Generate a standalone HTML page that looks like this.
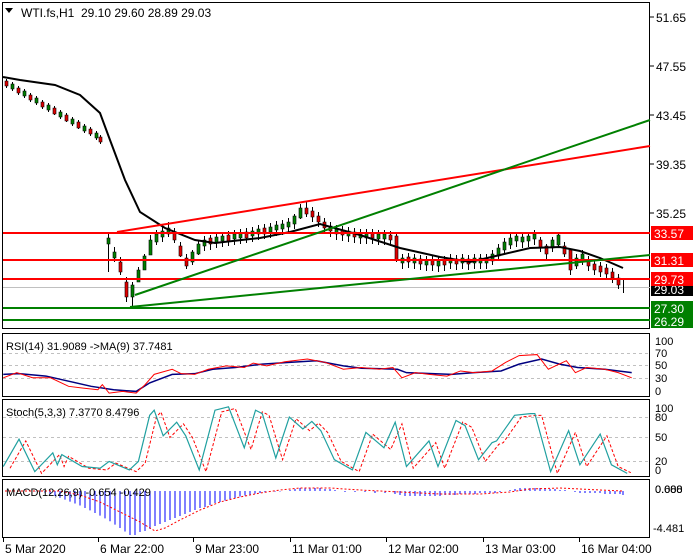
<!DOCTYPE html>
<html><head><meta charset="utf-8"><style>
html,body{margin:0;padding:0;background:#fff;width:700px;height:560px;overflow:hidden}
svg{display:block;font-family:"Liberation Sans",sans-serif}
text{font-size:12px}
.s{font-size:11px}
</style></head><body>
<svg width="700" height="560" xmlns="http://www.w3.org/2000/svg">
<!-- frames -->
<rect x="2.5" y="2.5" width="647" height="326" fill="none" stroke="#000"/>
<rect x="2.5" y="333.5" width="647" height="63" fill="none" stroke="#000"/>
<rect x="2.5" y="399.5" width="647" height="77" fill="none" stroke="#000"/>
<rect x="2.5" y="479.5" width="647" height="58" fill="none" stroke="#000"/>
<!-- price axis -->
<path d="M650,17h4M650,66h4M650,115h4M650,164h4M650,213h4" stroke="#000"/>
<text x="656" y="22">51.65</text><text x="656" y="71">47.55</text><text x="656" y="120">43.45</text><text x="656" y="169">39.35</text><text x="656" y="218">35.25</text>
<line x1="3" y1="287.5" x2="650" y2="287.5" stroke="#c0c0c0"/>
<!-- wicks -->
<path stroke="#000" fill="none" d="M6.5,79v9M12.5,82v9M18.5,86v9M24.5,89v9M30.5,93v9M36.5,96v9M42.5,100v9M48.5,103v9M54.5,106v9M60.5,110v9M66.5,113v9M72.5,117v9M78.5,120v9M84.5,124v9M90.5,127v9M96.5,131v9M100.5,135v9
M108.5,232v40M114.5,247v15M120.5,257v18M126.5,277v25M132.5,282v25M138.5,267v15M144.5,254v15M150.5,235v20M156.5,230v15M162.5,227v15M168.5,222v15M174.5,228v15M180.5,242v15M186.5,254v15M192.5,250v15M198.5,240v15M204.5,236v15M210.5,235v15M216.5,233v15M222.5,232v15M228.5,231v15M234.5,230v15M240.5,229v15M246.5,228v15M252.5,227v15M258.5,225v15M264.5,224v15M270.5,223v15M276.5,221v15M282.5,220v15M288.5,218v15M294.5,214v15M300.5,204v15M306.5,202v15M312.5,207v15M318.5,212v15M324.5,218v15M330.5,222v15M336.5,225v15M342.5,226v15M348.5,227v15M354.5,228v15M360.5,229v15M366.5,229v15M372.5,229v15M378.5,230v15M384.5,230v15M390.5,231v15M396.5,232v30M402.5,254v15M408.5,253v15M414.5,254v15M420.5,255v15M426.5,256v15M432.5,256v15M438.5,257v15M444.5,256v15M450.5,254v15M456.5,255v15M462.5,254v15M468.5,255v15M474.5,254v15M480.5,254v15M486.5,254v15M492.5,250v15M498.5,244v15M504.5,238v15M510.5,234v15M516.5,232v15M522.5,233v15M528.5,232v15M534.5,230v15M540.5,237v15M546.5,244v15M552.5,237v15M558.5,232v15M564.5,242v15M570.5,250v25M576.5,254v15M582.5,250v15M588.5,256v15M594.5,260v15M600.5,262v15M606.5,264v15M612.5,268v15M618.5,274v15M623.5,280v13"/>
<!-- red bodies -->
<path fill="#e00000" stroke="#000" stroke-width="0.6" d="M5,81h3v5h-3zM17,88h3v5h-3zM29,95h3v5h-3zM41,102h3v5h-3zM53,108h3v6h-3zM65,115h3v6h-3zM77,122h3v6h-3zM89,129h3v5h-3zM99,137h3v5h-3z
M119,262h3v10h-3zM125,282h3v15h-3zM173,232h3v8h-3zM179,246h3v10h-3zM185,258h3v8h-3zM209,238h3v6h-3zM227,235h3v6h-3zM245,232h3v6h-3zM263,228h3v6h-3zM305,208h3v6h-3zM311,211h3v6h-3zM317,216h3v6h-3zM323,222h3v6h-3zM329,226h3v5h-3zM341,230h3v5h-3zM353,232h3v5h-3zM371,233h3v5h-3zM389,235h3v5h-3zM395,236h3v24h-3zM407,257h3v5h-3zM419,259h3v5h-3zM431,260h3v5h-3zM443,260h3v5h-3zM455,259h3v5h-3zM467,259h3v5h-3zM539,240h3v8h-3zM545,246h3v8h-3zM563,246h3v8h-3zM569,250h3v20h-3zM587,260h3v6h-3zM593,264h3v6h-3zM599,266h3v6h-3zM605,268h3v6h-3zM611,272h3v6h-3zM617,278h3v7h-3z"/>
<!-- green bodies -->
<path fill="#008000" stroke="#000" stroke-width="0.6" d="M11,84h3v5h-3zM23,91h3v5h-3zM35,98h3v5h-3zM47,105h3v5h-3zM59,112h3v5h-3zM71,119h3v5h-3zM83,126h3v5h-3zM95,133h3v5h-3z
M107,238h3v6h-3zM113,252h3v6h-3zM131,285h3v12h-3zM137,270h3v12h-3zM143,256h3v14h-3zM149,240h3v15h-3zM155,234h3v8h-3zM161,231h3v6h-3zM167,228h3v6h-3zM191,252h3v10h-3zM197,244h3v10h-3zM203,240h3v6h-3zM215,237h3v6h-3zM221,236h3v5h-3zM233,234h3v5h-3zM239,233h3v5h-3zM251,231h3v5h-3zM257,229h3v5h-3zM269,227h3v5h-3zM275,225h3v5h-3zM281,224h3v5h-3zM287,222h3v5h-3zM293,216h3v8h-3zM299,208h3v10h-3zM335,229h3v5h-3zM347,231h3v5h-3zM359,233h3v5h-3zM365,233h3v5h-3zM377,234h3v5h-3zM383,234h3v5h-3zM401,258h3v5h-3zM413,258h3v5h-3zM425,260h3v5h-3zM437,261h3v5h-3zM449,258h3v5h-3zM461,258h3v5h-3zM473,258h3v5h-3zM479,258h3v5h-3zM485,258h3v5h-3zM491,254h3v7h-3zM497,248h3v8h-3zM503,242h3v8h-3zM509,238h3v7h-3zM515,236h3v5h-3zM521,237h3v5h-3zM527,236h3v5h-3zM533,234h3v5h-3zM551,240h3v8h-3zM557,235h3v10h-3zM575,258h3v8h-3zM581,254h3v8h-3z"/>
<!-- MA -->
<polyline fill="none" stroke="#000" stroke-width="2" points="3,77 20,80 55,85 80,95 100,113 110,140 125,180 140,212 165,228 195,240 215,243 260,238 290,232 320,224 360,235 400,248 440,257 470,262 500,255 530,248 560,247 580,251 600,258 623,268"/>
<!-- lines -->
<path stroke="#ff0000" stroke-width="2" d="M3,233H650M3,260H650M3,279H650M117,232L650,146"/>
<path stroke="#008000" stroke-width="2" d="M3,308H650M3,320H650M135,295L650,120M130,307L650,255"/>
<!-- labels -->
<rect x="651" y="226" width="42" height="14" fill="#ff0000"/><text x="654" y="238" fill="#fff">33.57</text>
<rect x="651" y="253" width="42" height="14" fill="#ff0000"/><text x="654" y="265" fill="#fff">31.31</text>
<rect x="651" y="282" width="42" height="14" fill="#000"/><text x="654" y="294" fill="#fff">29.03</text>
<rect x="651" y="272" width="42" height="14" fill="#ff0000"/><text x="654" y="284" fill="#fff">29.73</text>
<rect x="651" y="301" width="42" height="14" fill="#008000"/><text x="654" y="313" fill="#fff">27.30</text>
<rect x="651" y="314" width="42" height="14" fill="#008000"/><text x="654" y="326" fill="#fff">26.29</text>
<!-- title -->
<polygon points="5,8 13,8 9,13" fill="#000"/>
<text x="21" y="17">WTI.fs,H1&#160;&#160;29.10 29.60 28.89 29.03</text>
<!-- RSI -->
<path stroke="#c0c0c0" stroke-dasharray="3,3" d="M3,353.5H649M3,365.5H649M3,378.5H649"/>
<g transform="translate(1,330) scale(0.4505,0.3413)">
<polyline vector-effect="non-scaling-stroke" fill="none" stroke="#000080" stroke-width="1.5" points="5,130 40,128 100,135 150,150 200,165 250,175 300,180 330,155 380,130 430,128 470,115 520,110 580,100 640,95 700,90 760,105 800,112 880,115 900,125 1000,130 1050,125 1110,120 1150,100 1200,85 1240,100 1280,110 1340,115 1400,125"/>
<polyline vector-effect="non-scaling-stroke" fill="none" stroke="#ff0000" stroke-width="1" points="5,140 35,125 70,140 110,140 150,165 180,170 215,175 225,160 240,185 270,180 300,185 320,160 340,130 380,115 400,128 430,130 460,115 500,105 540,110 560,97 590,105 630,93 680,85 720,95 760,115 800,110 840,115 870,110 890,140 920,125 950,130 990,135 1020,120 1050,125 1090,120 1120,95 1150,75 1190,72 1215,115 1255,90 1275,125 1300,110 1340,115 1370,125 1400,140"/>
</g>
<text class="s" x="6" y="350">RSI(14) 31.9089  -&gt;MA(9) 37.7481</text>
<text class="s" x="655" y="345">100</text><text class="s" x="655" y="357">70</text><text class="s" x="655" y="369">50</text><text class="s" x="655" y="382">30</text><text class="s" x="655" y="395">0</text>
<!-- Stoch -->
<path stroke="#c0c0c0" stroke-dasharray="3,3" d="M3,417.5H649M3,437.5H649M3,461.5H649"/>
<g transform="translate(1,330) scale(0.4505,0.3413)">
<polyline vector-effect="non-scaling-stroke" fill="none" stroke="#ff0000" stroke-width="1" stroke-dasharray="3,2" points="20,405 55,325 90,420 130,365 140,400 150,370 195,405 235,410 255,390 300,415 320,390 345,255 355,240 375,315 405,275 425,315 455,415 490,240 520,230 555,350 580,240 595,250 625,380 655,260 685,295 705,273 725,300 755,385 795,415 825,305 865,350 890,275 915,405 965,330 985,405 1025,270 1045,285 1075,385 1105,335 1115,330 1155,255 1190,250 1200,250 1235,420 1275,300 1300,400 1345,310 1370,400 1398,418"/>
<polyline vector-effect="non-scaling-stroke" fill="none" stroke="#20a0a0" stroke-width="1.2" points="5,400 40,320 75,415 115,360 125,395 135,365 180,400 220,405 240,385 285,410 305,385 330,250 340,235 360,310 390,270 410,310 440,410 475,235 505,225 540,345 565,235 580,245 610,375 640,255 670,290 690,268 710,295 740,380 780,410 810,300 850,345 875,270 900,400 950,325 970,400 1010,265 1030,280 1060,380 1090,330 1100,325 1140,250 1175,245 1185,245 1220,415 1260,295 1285,395 1330,305 1355,395 1390,420"/>
</g>
<text class="s" x="6" y="416">Stoch(5,3,3) 7.3770 8.4796</text>
<text class="s" x="655" y="412">100</text><text class="s" x="655" y="421">80</text><text class="s" x="655" y="441">50</text><text class="s" x="655" y="465">20</text><text class="s" x="655" y="474">0</text>
<!-- MACD -->
<path stroke="#0000ff" d="M35,491v0.5M40,491v1.1M45,491v2M50,491v3.4M55,491v5M60,491v6.7M65,491v8.6M70,491v10.6M75,491v12.5M80,491v14.5M85,491v17M90,491v19.4M95,491v22M100,491v24.6M105,491v27.4M110,491v30.2M115,491v33.6M120,491v37M125,491v40.5M130,491v44M135,491v44M140,491v41M145,491v40M150,491v38M155,491v35M160,491v33M165,491v31M170,491v29M175,491v27M180,491v25M185,491v23M190,491v21M195,491v19M200,491v17M205,491v16M210,491v14M215,491v12M220,491v11M225,491v9.5M230,491v8M235,491v7M240,491v5.5M245,491v4.5M250,491v3.5M255,491v2.6M260,491v2M265,491v1.4M270,491v1M275,491v0.6M280,491v0.5M290,491v-1M295,491v-2M300,491v-3M305,491v-3M310,491v-3M315,491v-3M320,491v-3M325,491v-2M330,491v-2M335,491v-1M345,491v1M355,491v1M365,491v1M375,491v2M385,491v2M395,491v3M400,491v4M405,491v5M410,491v5M415,491v5M420,491v5M425,491v5M430,491v5M435,491v5M440,491v5M445,491v4M450,491v4M455,491v4M460,491v3M465,491v3M470,491v3M475,491v3M480,491v2M485,491v2M490,491v2M495,491v2M500,491v1M510,491v-1M515,491v-2M520,491v-3M525,491v-3M530,491v-3M535,491v-3M540,491v-3M545,491v-3M550,491v-2M555,491v-2M560,491v-1M565,491v-1M575,491v1M580,491v2M585,491v2M590,491v2M595,491v2M600,491v2M605,491v3M610,491v3M615,491v3M620,491v3M623,491v4"/>
<polyline fill="none" stroke="#ff0000" stroke-dasharray="2,2" points="5,491 60,491 80,495 100,502 120,512 140,522 155,531 165,528 180,520 200,510 220,502 240,497 260,493 280,490 300,488 330,488 360,490 400,492 440,494 480,494 510,492 530,489 560,488 580,489 600,490 623,491"/>
<text class="s" x="6" y="496">MACD(12,26,9) -0.654 -0.429</text>
<text class="s" x="655" y="493">0.688</text><text class="s" x="655" y="493">0.000</text><text class="s" x="653" y="532">-4.481</text>
<!-- dates -->
<path stroke="#000" d="M3.5,538v4M98.5,538v4M193.5,538v4M290.5,538v4M386.5,538v4M483.5,538v4M579.5,538v4"/>
<text x="5" y="553">5 Mar 2020</text><text x="100" y="553">6 Mar 22:00</text><text x="195" y="553">9 Mar 23:00</text><text x="292" y="553">11 Mar 01:00</text><text x="388" y="553">12 Mar 02:00</text><text x="485" y="553">13 Mar 03:00</text><text x="581" y="553">16 Mar 04:00</text>
</svg>
</body></html>
